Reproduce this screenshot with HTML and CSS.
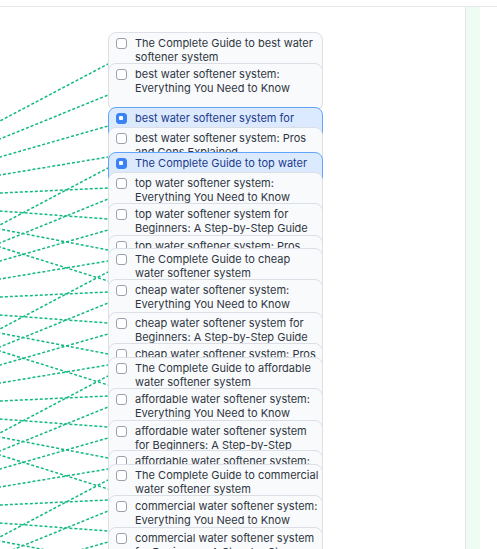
FILE: index.html
```html
<!DOCTYPE html>
<html>
<head>
<meta charset="utf-8">
<link rel="stylesheet" href="styles.css">
</head>
<body>
<div class="app">
  <div class="topbar"></div>
  <div class="main">
    <div class="canvas">
      <svg class="edges" width="465" height="560" xmlns="http://www.w3.org/2000/svg">
        <g transform="translate(0,-7)">
          <line x1="-150" y1="200" x2="108" y2="64"/>
          <line x1="-150" y1="200" x2="108" y2="95"/>
          <line x1="-150" y1="200" x2="108" y2="126"/>
          <line x1="-150" y1="200" x2="108" y2="157"/>
          <line x1="-150" y1="200" x2="108" y2="188"/>
          <line x1="-150" y1="200" x2="108" y2="219"/>
          <line x1="-150" y1="200" x2="108" y2="250"/>
          <line x1="-150" y1="200" x2="108" y2="281"/>
          <line x1="-150" y1="304" x2="108" y2="168"/>
          <line x1="-150" y1="304" x2="108" y2="199"/>
          <line x1="-150" y1="304" x2="108" y2="230"/>
          <line x1="-150" y1="304" x2="108" y2="261"/>
          <line x1="-150" y1="304" x2="108" y2="292"/>
          <line x1="-150" y1="304" x2="108" y2="323"/>
          <line x1="-150" y1="304" x2="108" y2="354"/>
          <line x1="-150" y1="304" x2="108" y2="385"/>
          <line x1="-150" y1="408" x2="108" y2="272"/>
          <line x1="-150" y1="408" x2="108" y2="303"/>
          <line x1="-150" y1="408" x2="108" y2="334"/>
          <line x1="-150" y1="408" x2="108" y2="365"/>
          <line x1="-150" y1="408" x2="108" y2="396"/>
          <line x1="-150" y1="408" x2="108" y2="427"/>
          <line x1="-150" y1="408" x2="108" y2="458"/>
          <line x1="-150" y1="408" x2="108" y2="489"/>
          <line x1="-150" y1="512" x2="108" y2="376"/>
          <line x1="-150" y1="512" x2="108" y2="407"/>
          <line x1="-150" y1="512" x2="108" y2="438"/>
          <line x1="-150" y1="512" x2="108" y2="469"/>
          <line x1="-150" y1="512" x2="108" y2="500"/>
          <line x1="-150" y1="512" x2="108" y2="531"/>
          <line x1="-150" y1="512" x2="108" y2="562"/>
          <line x1="-150" y1="512" x2="108" y2="593"/>
          <line x1="-150" y1="616" x2="108" y2="480"/>
          <line x1="-150" y1="616" x2="108" y2="511"/>
          <line x1="-150" y1="616" x2="108" y2="542"/>
          <line x1="-150" y1="616" x2="108" y2="573"/>
        </g>
      </svg>

      <div class="node" style="top:25px"><span class="cb"></span><span class="title">The Complete Guide to best water softener system</span></div>
      <div class="node" style="top:56px"><span class="cb"></span><span class="title">best water softener system: Everything You Need to Know</span></div>
      <div class="node selected" style="top:100px"><span class="cb"></span><span class="title">best water softener system for Beginners: A Step-by-Step Guide</span></div>
      <div class="node" style="top:120px"><span class="cb"></span><span class="title">best water softener system: Pros and Cons Explained</span></div>
      <div class="node selected" style="top:145px"><span class="cb"></span><span class="title">The Complete Guide to top water softener system</span></div>
      <div class="node" style="top:165px"><span class="cb"></span><span class="title">top water softener system: Everything You Need to Know</span></div>
      <div class="node" style="top:196px"><span class="cb"></span><span class="title">top water softener system for Beginners: A Step-by-Step Guide</span></div>
      <div class="node" style="top:228px"><span class="cb"></span><span class="title">top water softener system: Pros and Cons Explained</span></div>
      <div class="node" style="top:241px"><span class="cb"></span><span class="title">The Complete Guide to cheap water softener system</span></div>
      <div class="node" style="top:272px"><span class="cb"></span><span class="title">cheap water softener system: Everything You Need to Know</span></div>
      <div class="node" style="top:305px"><span class="cb"></span><span class="title">cheap water softener system for Beginners: A Step-by-Step Guide</span></div>
      <div class="node" style="top:336px"><span class="cb"></span><span class="title">cheap water softener system: Pros and Cons Explained</span></div>
      <div class="node" style="top:350px"><span class="cb"></span><span class="title">The Complete Guide to affordable water softener system</span></div>
      <div class="node" style="top:381px"><span class="cb"></span><span class="title">affordable water softener system: Everything You Need to Know</span></div>
      <div class="node" style="top:413px"><span class="cb"></span><span class="title">affordable water softener system for Beginners: A Step-by-Step Guide</span></div>
      <div class="node" style="top:443px"><span class="cb"></span><span class="title">affordable water softener system: Pros and Cons Explained</span></div>
      <div class="node" style="top:457px"><span class="cb"></span><span class="title">The Complete Guide to commercial water softener system</span></div>
      <div class="node" style="top:488px"><span class="cb"></span><span class="title">commercial water softener system: Everything You Need to Know</span></div>
      <div class="node" style="top:520px"><span class="cb"></span><span class="title">commercial water softener system for Beginners: A Step-by-Step Guide</span></div>
    </div>
    <div class="side"></div>
    <div class="rest"></div>
  </div>
</div>
</body>
</html>
```

FILE: styles.css
```css
* { box-sizing: border-box; }
html, body {
  margin: 0;
  padding: 0;
  background: #ffffff;
  font-family: Inter, "Noto Sans", "Liberation Sans", sans-serif;
}
.app {
  width: 497px;
  height: 549px;
  display: flex;
  flex-direction: column;
  overflow: hidden;
}
.topbar {
  height: 7px;
  border-bottom: 1px solid #e5e7eb;
  flex: none;
}
.main {
  flex: 1;
  display: flex;
  min-height: 0;
}
.canvas {
  width: 465px;
  position: relative;
  overflow: hidden;
  background: #ffffff;
}
.side {
  width: 15px;
  border-left: 1px solid #e2e4e8;
  background: #effcf3;
}
.rest {
  flex: 1;
  background: #ffffff;
}
.edges {
  position: absolute;
  left: 0;
  top: 0;
  overflow: visible;
}
.edges line {
  stroke: #10b981;
  stroke-width: 1.5;
  stroke-dasharray: 3 2;
  fill: none;
}
.node {
  position: absolute;
  left: 108px;
  width: 215px;
  height: 48px;
  display: flex;
  align-items: flex-start;
  gap: 8px;
  padding: 3px 3px 0 7px;
  background: #f9fafb;
  border: 1px solid #dcdfe5;
  border-radius: 8px;
  color: #2f3642;
  font-size: 11px;
  line-height: 14px;
}
.cb {
  flex: none;
  width: 11px;
  height: 11px;
  margin-top: 2px;
  border: 1.5px solid #9aa1ac;
  border-radius: 3px;
  background: #ffffff;
  position: relative;
}
.title {
  flex: 1;
  min-width: 0;
}
.node.selected {
  background: #dbeafe;
  border-color: #60a5fa;
  color: #1e3a8a;
}
.node.selected .cb {
  background: #3b82f6;
  border-color: #3b82f6;
}
.node.selected .cb::after {
  content: "";
  position: absolute;
  left: 2px;
  top: 2px;
  width: 4px;
  height: 4px;
  border-radius: 1px;
  background: #ffffff;
}
```
